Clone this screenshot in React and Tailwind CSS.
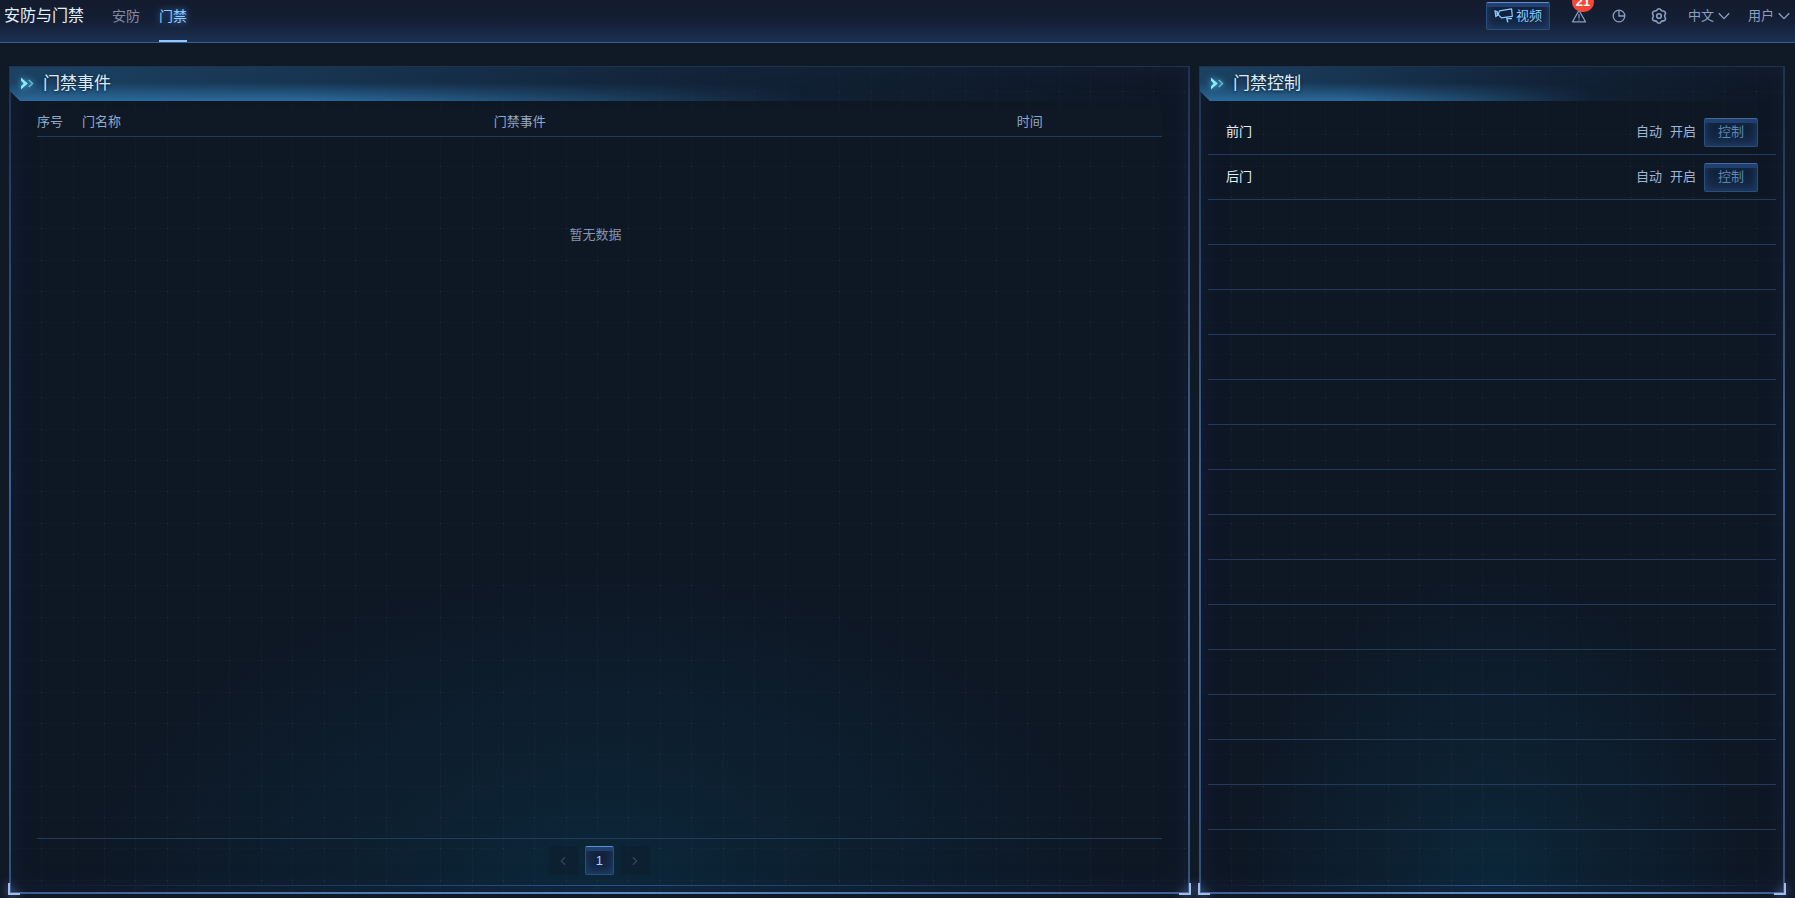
import React, { useState } from 'react';
import { ChevronLeft, ChevronRight } from 'lucide-react';

const doors = [
  { name: '前门', mode: '自动', state: '开启' },
  { name: '后门', mode: '自动', state: '开启' },
];

const ROW_COUNT = 16;
const gridSteps = [1, 2, 3, 4, 5, 6, 7, 8, 9, 10, 11, 12];

const CameraIcon = () => (
  <svg width="19" height="15" viewBox="0 0 19 15" fill="none" stroke="currentColor" strokeWidth="1.2">
    <path d="M5.4 2.8 17.6.9l.7 7.4-11 1.5-3-3.2z" strokeLinejoin="round" />
    <path d="M1 2.8l.8 5.6 2-1.2L3.2 3.6z" fill="currentColor" fillOpacity="0.5" />
    <path d="M12.6 9.2l1.2 5.2M18 10.6h-4.2" strokeWidth="1.4" />
  </svg>
);

const WarnIcon = () => (
  <svg width="16" height="16" viewBox="0 0 16 16" fill="none" stroke="currentColor" strokeWidth="1.2">
    <path d="M8 2.4 1.5 13.8h13z" strokeLinejoin="round" />
    <path d="M8 6v4.4M8 11.4v1.2" />
  </svg>
);

const ClockIcon = () => (
  <svg width="14" height="14" viewBox="0 0 14 14" fill="none" stroke="currentColor" strokeWidth="1.3">
    <circle cx="7" cy="7" r="5.8" />
    <path d="M7 1.2V7h5.8" />
  </svg>
);

const GearIcon = () => (
  <svg width="18" height="18" viewBox="0 0 18 18" fill="none" stroke="currentColor" strokeWidth="1.6">
    <path
      d="M9 1.8c.9 0 1.6.4 2 1.3.6.8 1.3 1 2.2.9 1 0 1.7.5 2.1 1.3.4.9.3 1.6-.3 2.4-.5.8-.5 1.7 0 2.5.6.8.7 1.6.3 2.4-.4.9-1.1 1.4-2.1 1.3-.9-.1-1.6.2-2.2 1-.4.8-1.1 1.3-2 1.3s-1.600-.5-2-1.3c-.6-.8-1.3-1.1-2.2-1-1 .1-1.7-.4-2.1-1.3-.4-.8-.3-1.600.3-2.400.5-.8.5-1.700 0-2.500-.6-.8-.7-1.500-.3-2.400.4-.8 1.100-1.300 2.100-1.300.9.1 1.600-.1 2.200-.9.4-.9 1.100-1.300 2-1.300z"
      strokeLinejoin="round"
    />
    <circle cx="9" cy="9" r="2.3" />
  </svg>
);

const DownIcon = () => (
  <svg width="12" height="8" viewBox="0 0 12 8" fill="none" stroke="currentColor" strokeWidth="1.3">
    <path d="M.8 1.2 6 6.6l5.2-5.4" />
  </svg>
);

const ArrowsIcon = () => (
  <svg width="14" height="14" viewBox="0 0 14 14" className="overflow-visible drop-shadow-[0_0_3px_#4cc8f0]">
    <path d="M1 .6 7.8 6.5 1 12.4V9.2l2.6-2.7L1 3.8z" fill="#8ce9ff" />
    <path d="M8.8 3l3.6 3.5-3.6 3.5" fill="none" stroke="#6cb4d8" strokeWidth="1.6" />
  </svg>
);

// faint grid, tiled from the bottom left corner
const GridBackdrop = ({ id }) => (
  <svg className="pointer-events-none absolute inset-0 size-full -scale-y-100" aria-hidden="true">
    <defs>
      <pattern id={id} width="399" height="263" patternUnits="userSpaceOnUse">
        {gridSteps.map((n) => (
          <rect key={`v${n}`} x={Math.round(n * 31.35)} y="0" width="1" height="263" fill="#8fb0d8" fillOpacity="0.025" />
        ))}
        {gridSteps.slice(0, 8).map((n) => (
          <rect key={`h${n}`} x="0" y={Math.round(263 - n * 31.35)} width="399" height="1" fill="#8fb0d8" fillOpacity="0.018" />
        ))}
        {gridSteps.slice(0, 8).map((r) =>
          gridSteps.map((c) => (
            <rect
              key={`${r}-${c}`}
              x={Math.round(c * 31.35)}
              y={Math.round(263 - r * 31.35)}
              width="1"
              height="1"
              fill="#b4c8dc"
              fillOpacity="0.1"
            />
          ))
        )}
      </pattern>
    </defs>
    <rect width="100%" height="100%" fill={`url(#${id})`} />
  </svg>
);

const GlowButton = ({ className = '', children, ...props }) => (
  <button
    type="button"
    className={`flex items-center justify-center rounded-xs border border-[#2b4d7a] bg-[linear-gradient(to_bottom,#203f70_0_4px,transparent_4px),linear-gradient(#0f1c33,#162b4b)] shadow-[inset_0_0_10px_#23436f] ${className}`}
    {...props}
  >
    {children}
  </button>
);

const Panel = ({ id, title, children }) => (
  <section className="relative flex flex-col border border-[#1f3350] bg-[#0e1724] bg-[radial-gradient(ellipse_45%_40%_at_50%_100%,#0b273a_0%,transparent_100%)] shadow-[inset_0_0_24px_#1b284b80]">
    <GridBackdrop id={id} />
    {/* frame lines */}
    <div className="pointer-events-none absolute inset-y-0 -left-px w-0.5 bg-linear-to-b from-[#1f3350] via-[#40608f] to-[#33507a]" />
    <div className="pointer-events-none absolute inset-y-0 -right-px w-0.5 bg-linear-to-b from-[#1f3350] via-[#40608f] to-[#33507a]" />
    <div className="pointer-events-none absolute inset-x-0 bottom-[7px] h-px bg-linear-to-r from-transparent via-[#2c5282] to-transparent" />
    <div className="pointer-events-none absolute inset-x-0 -bottom-px h-0.5 bg-linear-to-r from-[#3c5f95] via-[#5f8cc8] to-[#3c5f95]" />
    <div className="pointer-events-none absolute -bottom-0.5 -left-0.5 size-3 border-b-2 border-l-2 border-[#a6bbe6] drop-shadow-[0_0_4px_#6b93d0]" />
    <div className="pointer-events-none absolute -right-0.5 -bottom-0.5 size-3 border-r-2 border-b-2 border-[#a6bbe6] drop-shadow-[0_0_4px_#6b93d0]" />

    <header className="relative h-[34px] shrink-0 [clip-path:polygon(0_0,100%_0,100%_100%,10px_100%,0_24px)]">
      <div className="absolute inset-0 bg-linear-to-r from-[#1b4263] via-[#142a4490] via-60% to-transparent" />
      <div className="absolute inset-0 bg-[linear-gradient(to_bottom,transparent_45%,#2b6a9c_100%)] [mask-image:linear-gradient(to_right,#000_0%,#000_25%,transparent_68%)]" />
      <div className="relative flex h-full items-center gap-[9px] px-2.5">
        <ArrowsIcon />
        <h2 className="text-[17px] leading-6 text-[#dcebfa] [text-shadow:0_1px_3px_#0a1a30]">{title}</h2>
      </div>
    </header>
    {children}
  </section>
);

const EventTable = () => (
  <div className="relative mx-[27px] flex grow flex-col pt-2">
    <table className="w-full table-fixed border-collapse text-left">
      <thead className="bg-[#0f1926]">
        <tr className="h-[27px] border-b border-[#223b5c] text-[#93a7c9]">
          <th className="w-[4%] font-normal">序号</th>
          <th className="w-[36.6%] font-normal">门名称</th>
          <th className="w-[46.5%] font-normal">门禁事件</th>
          <th className="font-normal">时间</th>
        </tr>
      </thead>
      <tbody>
        <tr>
          <td colSpan={4} className="pt-[88px] pr-2 text-center text-[#8494b2]">暂无数据</td>
        </tr>
      </tbody>
    </table>
  </div>
);

const Pagination = () => (
  <nav
    aria-label="分页"
    className="relative mx-[27px] mb-[18px] flex justify-center gap-[7px] border-t border-[#223b5c] pt-[7px]"
  >
    <button type="button" disabled aria-label="上一页" className="flex size-[29px] items-center justify-center bg-[#0d1c2b80] text-[#33455a]">
      <ChevronLeft size={14} />
    </button>
    <GlowButton className="size-[29px] border-t-[#5f8fd0] text-[#a8d4ff]">1</GlowButton>
    <button type="button" disabled aria-label="下一页" className="flex size-[29px] items-center justify-center bg-[#0d1c2b80] text-[#33455a]">
      <ChevronRight size={14} />
    </button>
  </nav>
);

const DoorList = () => (
  <ul className="relative mx-2 mt-[9px]">
    {Array.from({ length: ROW_COUNT }, (_, i) => {
      const door = doors[i];
      return (
        <li key={i} className="flex h-[45px] items-center gap-2 border-b border-[#223b5c] px-[18px]">
          {door && (
            <>
              <span className="grow text-[#e2efff]">{door.name}</span>
              <span>{door.mode}</span>
              <span>{door.state}</span>
              <GlowButton className="h-[29px] w-[54px] border-t-[#426a9f] text-[#5c86ad]">控制</GlowButton>
            </>
          )}
        </li>
      );
    })}
  </ul>
);

export default function App() {
  const [lang, setLang] = useState('zh');

  return (
    <div className="flex min-h-screen flex-col bg-[#101926] font-['Liberation_Sans','Noto_Sans_CJK_SC',sans-serif] text-[13px] leading-5 text-[#9fb4d6]">
      <header className="flex h-[43px] shrink-0 items-start justify-between border-b border-[#3c5e8e] bg-linear-to-b from-[#131b2d] via-[#141f35] to-[#1c3052]">
        <div className="flex h-full pl-1">
          <h1 className="pt-1 text-base text-[#e2efff]">安防与门禁</h1>
          <nav className="ml-7 flex gap-[19px] text-sm">
            <a href="#security" className="pt-1.5 text-[#7f8ca8]">安防</a>
            <a
              href="#access"
              className="border-b-2 border-[#93c8ff] pt-1.5 text-[#93c8ff] [text-shadow:0_0_6px_#4a90e0]"
            >
              门禁
            </a>
          </nav>
        </div>

        <div className="flex h-[31px] items-center gap-[18px] pr-[5px] text-[#8c9fc0]">
          <GlowButton className="h-7 w-16 gap-[3px] border-t-[#5f8fd0] text-[#8ccbff]">
            <CameraIcon />
            视频
          </GlowButton>
          <button type="button" aria-label="告警" className="relative flex w-[22px] justify-center">
            <WarnIcon />
            <span className="absolute -top-4 left-1 h-5 w-[22px] rounded-full bg-[#f5483b] text-center text-[13px] font-bold text-white">
              21
            </span>
          </button>
          <button type="button" aria-label="历史" className="flex w-[22px] justify-center">
            <ClockIcon />
          </button>
          <button type="button" aria-label="设置" className="flex w-[22px] justify-center">
            <GearIcon />
          </button>
          <label className="flex items-center gap-1">
            <select
              aria-label="语言"
              value={lang}
              onChange={(e) => setLang(e.target.value)}
              className="w-[26px] appearance-none bg-transparent outline-none"
            >
              <option value="zh">中文</option>
            </select>
            <DownIcon />
          </label>
          <button type="button" className="flex items-center gap-1">
            用户
            <DownIcon />
          </button>
        </div>
      </header>

      <main className="grid grow grid-cols-[2.015fr_1fr] gap-[9px] pt-[23px] pr-2.5 pb-1 pl-[9px]">
        <Panel id="grid-events" title="门禁事件">
          <EventTable />
          <Pagination />
        </Panel>
        <Panel id="grid-control" title="门禁控制">
          <DoorList />
        </Panel>
      </main>
    </div>
  );
}
